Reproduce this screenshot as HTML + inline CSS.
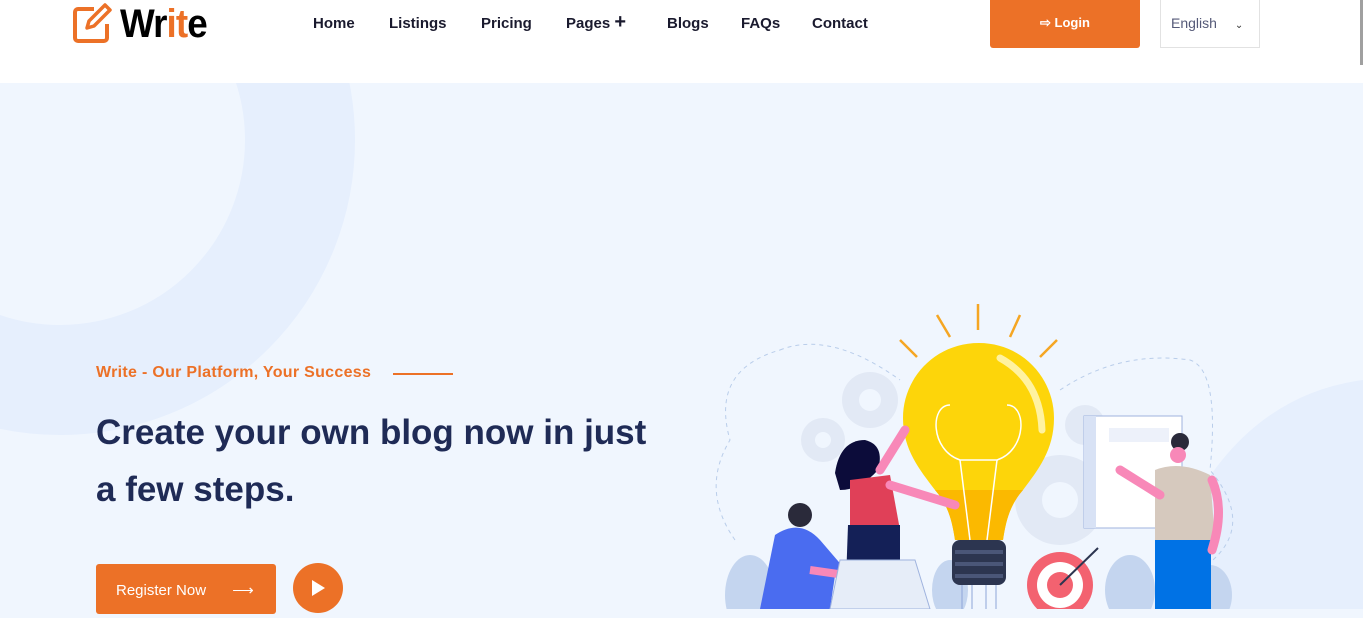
<!DOCTYPE html>
<html><head><meta charset="utf-8"><style>
*{margin:0;padding:0;box-sizing:border-box}
body{width:1363px;height:609px;overflow:hidden;background:#f0f6fe;font-family:"Liberation Sans",sans-serif;position:relative}
.hdr{position:absolute;left:0;top:0;width:1363px;height:83px;background:#fff;z-index:5}
.nav a{position:absolute;top:15px;font-size:15px;font-weight:bold;color:#1a1a2e;text-decoration:none}
.login{position:absolute;left:990px;top:0;width:150px;height:48px;background:#ec7127;border-radius:0 0 3px 3px;color:#fff;font-size:13px;font-weight:bold;text-align:center;line-height:46px}
.lang{position:absolute;left:1160px;top:0;width:100px;height:48px;border:1px solid #e2e2e2;border-top:none;color:#555a78;font-size:14px;line-height:46px;padding-left:10px}
.sb{position:absolute;left:1360px;top:0;width:3px;height:65px;background:#a0a0a0}
.ring{position:absolute;left:-235px;top:-155px;width:590px;height:590px;border-radius:50%;border:110px solid #e6effd}
.tag{position:absolute;left:96px;top:364px;font-size:16px;font-weight:bold;color:#ec7127;letter-spacing:0.3px}
.tagl{position:absolute;left:393px;top:373px;width:60px;height:2px;background:#ec7127}
h1{position:absolute;left:96px;top:404px;font-size:35px;line-height:57px;color:#1f2b56;font-weight:bold;width:570px;letter-spacing:0px}
.reg{position:absolute;left:96px;top:564px;width:180px;height:50px;background:#ec7127;border-radius:3px;color:#fff;font-size:15px;padding:17px 0 0 20px}
.play{position:absolute;left:293px;top:563px;width:50px;height:50px;border-radius:50%;background:#ec7127}
</style></head><body>
<div class="ring"></div>
<svg style="position:absolute;left:1150px;top:380px" width="213" height="229"><path d="M0 229 Q60 20 213 0 L213 229Z" fill="#e6effd"/></svg>
<div class="hdr">
<svg style="position:absolute;left:72px;top:2px" width="40" height="42" viewBox="0 0 40 42"><path d="M22 7H6a3 3 0 0 0-3 3v26a3 3 0 0 0 3 3h26a3 3 0 0 0 3-3V22" fill="none" stroke="#ec7127" stroke-width="4"/><path d="M33 3l5 5-16 16-7 2 2-7z" fill="none" stroke="#ec7127" stroke-width="3.5" stroke-linejoin="round"/></svg>
<div style="position:absolute;left:120px;top:2px;font-size:40px;font-weight:bold;letter-spacing:-1px;transform:scaleX(0.92);transform-origin:left">Wr<span style="color:#ec7127">it</span>e</div>
<div class="nav"><a style="left:313px">Home</a><a style="left:389px">Listings</a><a style="left:481px">Pricing</a><a style="left:566px">Pages <span style="font-size:20px;line-height:10px">+</span></a><a style="left:667px">Blogs</a><a style="left:741px">FAQs</a><a style="left:812px">Contact</a></div>
<div class="login">⇨ Login</div>
<div class="lang">English <span style="font-size:10px;margin-left:14px;color:#333">⌄</span></div>
<div class="sb"></div>
</div>
<div class="tag">Write - Our Platform, Your Success</div><div class="tagl"></div>
<h1>Create your own blog now in just<br>a few steps.</h1>
<div class="reg">Register Now <span style="margin-left:22px">⟶</span></div>
<div class="play"><svg width="50" height="50"><path d="M19 17l13 8-13 8z" fill="#fff"/></svg></div>
<svg style="position:absolute;left:700px;top:290px" width="600" height="319" viewBox="0 0 600 319">
<path d="M80 60 Q130 40 200 90 M35 250 Q0 200 30 150 Q10 80 80 60 M360 100 Q420 60 490 70 Q520 80 510 180 Q560 240 500 280" fill="none" stroke="#b9cdea" stroke-dasharray="4 4"/>
<g fill="#e2e9f5"><circle cx="170" cy="110" r="28"/><circle cx="123" cy="150" r="22"/><circle cx="385" cy="135" r="20"/><circle cx="360" cy="210" r="45"/></g>
<g fill="#f0f6fe"><circle cx="170" cy="110" r="11"/><circle cx="123" cy="150" r="8"/><circle cx="360" cy="210" r="18"/></g>
<g fill="#c4d5ef"><ellipse cx="50" cy="305" rx="25" ry="40"/><ellipse cx="115" cy="285" rx="20" ry="30"/><ellipse cx="250" cy="300" rx="18" ry="30"/><ellipse cx="430" cy="300" rx="25" ry="35"/><ellipse cx="510" cy="305" rx="22" ry="30"/></g>
<g stroke="#f5a623" stroke-width="2.5"><path d="M278 14V40M237 25L250 47M320 25L310 47M200 50L217 67M357 50L340 67"/></g>
<path d="M279 53C235 53 203 88 203 128C203 160 220 180 235 200C248 215 252 230 255 250H303C306 230 310 215 323 200C338 180 354 160 354 128C354 88 322 53 279 53Z" fill="#fdd50a"/>
<path d="M235 200C248 215 252 230 255 250H303C306 230 310 215 323 200Z" fill="#fbb900"/>
<path d="M250 115c-20 0-20 45 10 55l10 80M307 115c20 0 20 45-10 55l-10 80M260 170h38" fill="none" stroke="#fff" stroke-width="1.5"/>
<path d="M300 68Q340 90 342 140" stroke="#fff2a0" stroke-width="7" fill="none" stroke-linecap="round"/>
<rect x="252" y="250" width="54" height="45" rx="8" fill="#2c3550"/><g stroke="#4a5678" stroke-width="4"><path d="M255 262H303M255 274H303M255 286H303"/></g>
<g stroke="#8ea5d8"><path d="M262 295V319M272 295V319M286 295V319M296 295V319"/></g>
<rect x="384" y="126" width="98" height="112" fill="#fff" stroke="#9fb3de"/><rect x="384" y="126" width="12" height="112" fill="#d8e2f5"/>
<rect x="409" y="138" width="60" height="14" fill="#edf1fa"/>
<circle cx="360" cy="295" r="33" fill="#f36270"/><circle cx="360" cy="295" r="23" fill="#fff"/><circle cx="360" cy="295" r="13" fill="#f36270"/><path d="M360 295L398 258" stroke="#2c3550" stroke-width="2"/>
<path d="M135 183Q140 150 165 150Q185 155 178 180Q160 200 140 200Z" fill="#0c0c3a"/>
<path d="M150 190L190 185 200 240H150Z" fill="#e04058"/>
<path d="M148 235H200V319H145Z" fill="#142057"/>
<path d="M190 195L255 215M180 180L205 140" stroke="#f888b8" stroke-width="9" stroke-linecap="round"/>
<circle cx="100" cy="225" r="12" fill="#2a2a3a"/>
<path d="M60 319L75 245 Q100 228 120 250 L150 285H135L130 319Z" fill="#4a6cf0"/>
<path d="M110 280L145 285" stroke="#f888b8" stroke-width="8"/>
<path d="M140 270H215L230 319H130Z" fill="#e6edf8" stroke="#9fb3de"/>
<circle cx="480" cy="152" r="9" fill="#2a2a3a"/><circle cx="478" cy="165" r="8" fill="#f888b8"/>
<path d="M455 180Q480 170 510 185L515 250H455Z" fill="#d6c9be"/>
<path d="M455 250H511V319H455Z" fill="#0072e5"/>
<path d="M460 205L420 180M512 190Q525 220 512 260" stroke="#f888b8" stroke-width="9" stroke-linecap="round" fill="none"/>
</svg>
</body></html>
